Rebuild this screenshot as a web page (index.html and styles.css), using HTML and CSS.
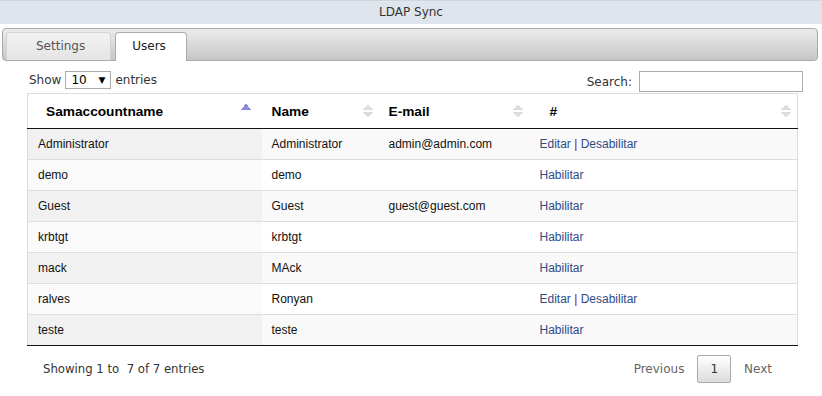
FILE: index.html
```html
<!DOCTYPE html>
<html lang="en">
<head>
    <meta charset="UTF-8">
    <title>LDAP Sync</title>
    <link rel="stylesheet" href="styles.css">
</head>
<body>

    <div class="titlebar">LDAP Sync</div>

    <div class="tabs">
        <div class="tab">Settings</div>
        <div class="tab active">Users</div>
    </div>

    <div class="wrapper">
        <div class="controls">
            <div class="length">
                Show
                <span class="select"><span>10</span><span class="caret">&#9660;</span></span>
                entries
            </div>
            <div class="filter">
                Search:
                <span class="search"></span>
            </div>
        </div>

        <table class="users">
            <thead>
                <tr>
                    <th class="c1 asc">Samaccountname</th>
                    <th class="c2">Name</th>
                    <th class="c3">E-mail</th>
                    <th class="c4">#</th>
                </tr>
            </thead>
            <tbody>
                <tr class="odd">
                    <td class="sorted">Administrator</td>
                    <td>Administrator</td>
                    <td>admin@admin.com</td>
                    <td><a href="#">Editar</a> <span class="sep">|</span> <a href="#">Desabilitar</a></td>
                </tr>
                <tr class="even">
                    <td class="sorted">demo</td>
                    <td>demo</td>
                    <td></td>
                    <td><a href="#">Habilitar</a></td>
                </tr>
                <tr class="odd">
                    <td class="sorted">Guest</td>
                    <td>Guest</td>
                    <td>guest@guest.com</td>
                    <td><a href="#">Habilitar</a></td>
                </tr>
                <tr class="even">
                    <td class="sorted">krbtgt</td>
                    <td>krbtgt</td>
                    <td></td>
                    <td><a href="#">Habilitar</a></td>
                </tr>
                <tr class="odd">
                    <td class="sorted">mack</td>
                    <td>MAck</td>
                    <td></td>
                    <td><a href="#">Habilitar</a></td>
                </tr>
                <tr class="even">
                    <td class="sorted">ralves</td>
                    <td>Ronyan</td>
                    <td></td>
                    <td><a href="#">Editar</a> <span class="sep">|</span> <a href="#">Desabilitar</a></td>
                </tr>
                <tr class="odd">
                    <td class="sorted">teste</td>
                    <td>teste</td>
                    <td></td>
                    <td><a href="#">Habilitar</a></td>
                </tr>
            </tbody>
        </table>

        <div class="footer">
            <div class="info">Showing 1 to &nbsp;7 of 7 entries</div>
            <div class="paging">
                <span class="pbtn">Previous</span>
                <span class="pbtn current">1</span>
                <span class="pbtn">Next</span>
            </div>
        </div>
    </div>

</body>
</html>
```

FILE: styles.css
```css
* {
    box-sizing: border-box;
    margin: 0;
    padding: 0;
}

body {
    font-family: "DejaVu Sans", Verdana, sans-serif;
    font-size: 12px;
    color: #333;
    background-color: white;
}

.titlebar {
    height: 24px;
    line-height: 23px;
    text-align: center;
    background-color: #dfe5ec;
    border-top: 1px solid #cfd6de;
    color: #333;
    font-size: 12px;
}

.tabs {
    display: flex;
    gap: 4px;
    margin: 4px 4px 0 2px;
    height: 33px;
    padding: 3px 0 0 3px;
    border: 1px solid #aaa;
    border-radius: 4px;
    background: linear-gradient(#ececec, #c6c6c6);
}

.tab {
    padding: 0 25px 0 29px;
    height: 28px;
    line-height: 26px;
    border: 1px solid #d3d3d3;
    border-bottom: none;
    border-radius: 4px 4px 0 0;
    background: linear-gradient(#f2f2f2, #e4e4e4);
    color: #555;
}

.tab.active {
    padding: 0 20px 0 16px;
    height: 29px;
    background: white;
    border-color: #aaa;
    color: #212121;
}

.wrapper {
    width: 776px;
    margin: 0 0 0 27px;
}

.controls {
    display: flex;
    justify-content: space-between;
    align-items: flex-end;
    height: 32px;
    padding: 10px 0 0 2px;
}

.length {
    display: flex;
    align-items: center;
    gap: 4px;
    margin-bottom: 4px;
}

.select {
    display: inline-flex;
    justify-content: space-between;
    align-items: center;
    width: 46px;
    height: 18px;
    padding: 0 5px 0 5px;
    border: 1px solid #aaa;
    color: #000;
}

.caret {
    font-size: 9px;
}

.filter {
    display: flex;
    align-items: center;
    gap: 7px;
    margin-bottom: 1px;
}

.search {
    display: inline-block;
    width: 164px;
    height: 21px;
    border: 1px solid #aaa;
}

.users {
    width: 771px;
    border-collapse: collapse;
    font-family: "Liberation Sans", Arial, sans-serif;
    font-size: 12px;
    color: #111;
    border-top: 1px solid #d5dde6;
    border-left: 1px solid #d5dde6;
    border-right: 1px solid #d5dde6;
}

.users th {
    height: 35px;
    text-align: left;
    font-size: 13.7px;
    font-weight: bold;
    color: #000;
    border-bottom: 1px solid #111;
    background-color: white;
    position: relative;
}

.users th::after {
    content: "";
    position: absolute;
    right: 6px;
    top: 10px;
    width: 10px;
    height: 14px;
    background:
        linear-gradient(to bottom right, transparent 50%, #ddd 50%) left 0 top 0 / 5px 6px no-repeat,
        linear-gradient(to bottom left, transparent 50%, #ddd 50%) right 0 top 0 / 5px 6px no-repeat,
        linear-gradient(to top right, transparent 50%, #ddd 50%) left 0 bottom 0 / 5px 6px no-repeat,
        linear-gradient(to top left, transparent 50%, #ddd 50%) right 0 bottom 0 / 5px 6px no-repeat;
}

.users th.asc::after {
    right: 11px;
    top: 9px;
    height: 7px;
    background:
        linear-gradient(to bottom right, transparent 50%, #8a8ad8 50%) left 0 top 0 / 5px 7px no-repeat,
        linear-gradient(to bottom left, transparent 50%, #8a8ad8 50%) right 0 top 0 / 5px 7px no-repeat;
}

.c1 { width: 234px; padding-left: 18px; }
.c2 { width: 117px; padding-left: 10px; }
.c3 { width: 150px; padding-left: 10px; }
.c4 { padding-left: 21px; }

.users td {
    height: 31px;
    padding: 0 10px;
    border-top: 1px solid #ddd;
}

.users tbody tr:first-child td {
    border-top: none;
}

.users tbody tr:last-child td {
    border-bottom: 1px solid #111;
}

.users td:nth-child(3) {
    padding-left: 10px;
}

.users td:nth-child(4) {
    padding-left: 11px;
}

.odd td {
    background-color: #f9f9f9;
}

.even td {
    background-color: white;
}

.odd td.sorted {
    background-color: #f1f1f1;
}

.even td.sorted {
    background-color: #fafafa;
}

.users a {
    color: #2f4b85;
    text-decoration: none;
}

.sep {
    color: #800080;
}

.footer {
    display: flex;
    justify-content: space-between;
    align-items: center;
    padding: 9px 19px 0 16px;
}

.info {
    color: #333;
    font-size: 11.7px;
}

.paging {
    display: flex;
    align-items: center;
    gap: 1px;
}

.pbtn {
    padding: 6px 12px;
    color: #666;
}

.pbtn.current {
    padding: 6px 12px;
    color: #333;
    border: 1px solid #aaa;
    border-radius: 2px;
    background: linear-gradient(#fff, #dcdcdc);
}
```
